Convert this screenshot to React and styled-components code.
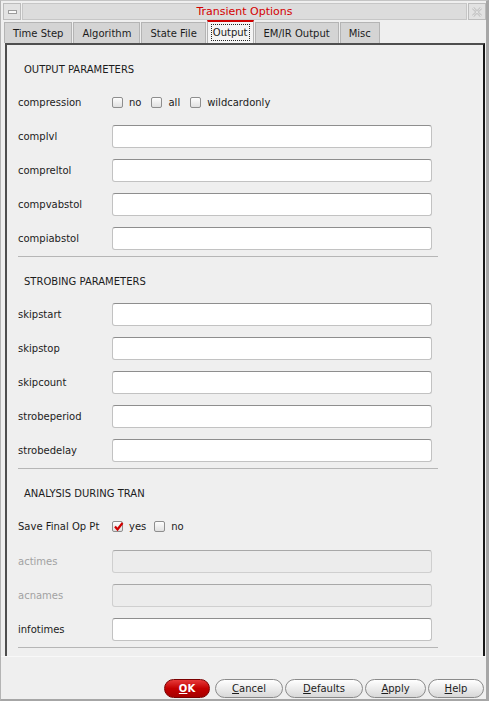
import React from 'react';
import styled, { createGlobalStyle } from 'styled-components';

const GlobalStyle = createGlobalStyle`
  html, body { margin: 0; padding: 0; background: #efefef; }
  body { font-family: "DejaVu Sans", sans-serif; font-size: 10px; color: #1c1c1c; }
  * { box-sizing: border-box; }
`;

const Window = styled.div`
  width: 489px;
  height: 701px;
  display: flex;
  flex-direction: column;
  background: #efefef;
  border-top: 1px solid #c4c4c4;
  border-left: 1px solid #b4b4b4;
  border-right: 3px solid #a6a6a6;
  border-bottom: 2px solid #a6a6a6;
`;

const TitleBar = styled.div`
  height: 21px;
  display: flex;
  padding: 2px 0 0 2px;
  gap: 1px;
`;

const FrameButton = styled.div`
  width: 18px;
  border: 1px solid #bcbcbc;
  background: #e2e2e2;
  display: flex;
  align-items: center;
  justify-content: center;
`;

const MinGlyph = styled.div`
  width: 9px;
  height: 4px;
  border: 1px solid #9c9c9c;
  background: #fafafa;
`;

const TitleArea = styled.div`
  flex: 1;
  border: 1px solid #c6c6c6;
  background: #dcdcdc;
  color: #d40000;
  font-size: 11px;
  display: flex;
  align-items: center;
  justify-content: center;
`;

const TabBar = styled.div`
  height: 24px;
  display: flex;
  align-items: flex-end;
  padding-left: 3px;
  gap: 1px;
`;

const Tab = styled.div`
  height: ${p => (p.$active ? 23 : 21)}px;
  padding: 0 ${p => (p.$active ? 3 : 8)}px;
  display: flex;
  align-items: center;
  border: 1px solid #b4b4b4;
  border-bottom: none;
  border-top: ${p => (p.$active ? '2px solid #d00000' : '1px solid #b4b4b4')};
  background: ${p => (p.$active ? '#f4f4f4' : '#d4d4d4')};
  color: #1c1c1c;
`;

const FocusText = styled.span`
  border: 1px dotted #222;
  padding: 2px 1px;
`;

const Panel = styled.div`
  flex: 1;
  margin: 0 1px 0 4px;
  border-left: 2px solid #4e4e4e;
  border-top: 2px solid #4e4e4e;
  border-right: 2px solid #161616;
  padding: 8px 0 0 11px;
  display: flex;
  flex-direction: column;
`;

const SectionHeader = styled.div`
  height: 32px;
  padding-left: 6px;
  display: flex;
  align-items: center;
  text-transform: uppercase;
`;

const Row = styled.div`
  height: ${p => p.$h || 34}px;
  display: flex;
  align-items: center;
`;

const Label = styled.div`
  width: 94px;
  color: ${p => (p.$disabled ? '#a2a2a2' : '#1c1c1c')};
`;

const TextInput = styled.div`
  width: 320px;
  height: 23px;
  border: 1px solid ${p => (p.$disabled ? '#cfcfcf' : '#c2c2c2')};
  border-top-color: ${p => (p.$disabled ? '#a8a8a8' : '#8e8e8e')};
  border-radius: 3px;
  background: ${p => (p.$disabled ? '#ececec' : '#ffffff')};
`;

const Separator = styled.div`
  width: 420px;
  height: 1px;
  background: #b6b6b6;
  margin: 1px 0 8px;
`;

const CheckGroup = styled.div`
  display: flex;
  align-items: center;
  gap: ${p => p.$gap || 10}px;
`;

const CheckItem = styled.label`
  display: flex;
  align-items: center;
  gap: 6px;
`;

const Box = styled.span`
  width: 11px;
  height: 11px;
  border: 1px solid #8e8e8e;
  border-radius: 2px;
  background: linear-gradient(#fdfdfd, #e0e0e0);
  position: relative;
  display: inline-block;
`;

const CheckMark = styled.svg`
  position: absolute;
  left: 0;
  top: -1px;
`;

const Footer = styled.div`
  height: 47px;
  display: flex;
  justify-content: flex-end;
  align-items: flex-end;
  gap: 2px;
  padding: 0 2px 1px 0;
  border-top: 1px solid #f8f8f8;
`;

const Button = styled.div`
  width: ${p => p.$w}px;
  height: 19px;
  border-radius: 10px;
  border: 1px solid ${p => (p.$primary ? '#7a0000' : '#8a8a8a')};
  background: ${p => (p.$primary
    ? 'linear-gradient(#e63a3a, #c40000 50%, #a60000)'
    : 'linear-gradient(#ffffff, #ececec 50%, #d8d8d8)')};
  color: ${p => (p.$primary ? '#ffffff' : '#1c1c1c')};
  font-weight: ${p => (p.$primary ? 'bold' : 'normal')};
  margin-right: ${p => p.$mr || 0}px;
  display: flex;
  align-items: center;
  justify-content: center;
`;

const Check = ({ label, checked }) => (
  <CheckItem>
    <Box>
      {checked && (
        <CheckMark width="11" height="11" viewBox="0 0 11 11">
          <path d="M2 5.5 L4.5 8.5 L9.5 2" fill="none" stroke="#d00000" strokeWidth="2.2" />
        </CheckMark>
      )}
    </Box>
    {label}
  </CheckItem>
);

const Field = ({ label, disabled }) => (
  <Row>
    <Label $disabled={disabled}>{label}</Label>
    <TextInput $disabled={disabled} />
  </Row>
);

const tabs = ['Time Step', 'Algorithm', 'State File', 'Output', 'EM/IR Output', 'Misc'];

const App = () => (
  <>
    <GlobalStyle />
    <Window>
      <TitleBar>
        <FrameButton><MinGlyph /></FrameButton>
        <TitleArea>Transient Options</TitleArea>
        <FrameButton>
          <svg width="12" height="12" viewBox="0 0 12 12">
            <path d="M2 2 L10 10 M10 2 L2 10" stroke="#c8c8c8" strokeWidth="3" />
            <path d="M2 2 L10 10 M10 2 L2 10" stroke="#f2f2f2" strokeWidth="1" strokeDasharray="1 1" />
          </svg>
        </FrameButton>
      </TitleBar>
      <TabBar>
        {tabs.map(t => (
          <Tab key={t} $active={t === 'Output'}>
            {t === 'Output' ? <FocusText>{t}</FocusText> : t}
          </Tab>
        ))}
      </TabBar>
      <Panel>
        <SectionHeader>Output Parameters</SectionHeader>
        <Row>
          <Label>compression</Label>
          <CheckGroup>
            <Check label="no" />
            <Check label="all" />
            <Check label="wildcardonly" />
          </CheckGroup>
        </Row>
        <Field label="complvl" />
        <Field label="compreltol" />
        <Field label="compvabstol" />
        <Field label="compiabstol" />
        <Separator />

        <SectionHeader>Strobing Parameters</SectionHeader>
        <Field label="skipstart" />
        <Field label="skipstop" />
        <Field label="skipcount" />
        <Field label="strobeperiod" />
        <Field label="strobedelay" />
        <Separator />

        <SectionHeader>Analysis During Tran</SectionHeader>
        <Row $h={35}>
          <Label>Save Final Op Pt</Label>
          <CheckGroup $gap={8}>
            <Check label="yes" checked />
            <Check label="no" />
          </CheckGroup>
        </Row>
        <Field label="actimes" disabled />
        <Field label="acnames" disabled />
        <Field label="infotimes" />
        <Separator />
      </Panel>
      <Footer>
        <Button $primary $w={46} $mr={3}><u>O</u>K</Button>
        <Button $w={68}><u>C</u>ancel</Button>
        <Button $w={78}><u>D</u>efaults</Button>
        <Button $w={61}><u>A</u>pply</Button>
        <Button $w={56}><u>H</u>elp</Button>
      </Footer>
    </Window>
  </>
);

export default App;
